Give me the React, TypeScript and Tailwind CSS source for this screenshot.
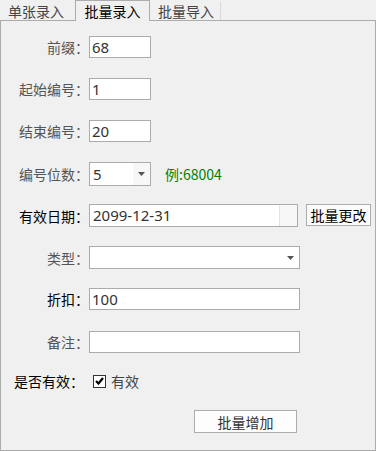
const cjk = "font-['Noto_Sans_CJK_SC',sans-serif]"
const num = "font-['Noto_Sans','Noto_Sans_CJK_SC',sans-serif]"

function Label({ text, dark = false }: { text: string; dark?: boolean }) {
  return (
    <div
      className={`w-[88px] shrink-0 text-right text-[14px] leading-none ${cjk} ${
        dark ? "text-black" : "text-[#555]"
      }`}
    >
      {text}：
    </div>
  )
}

function TextBox({ value = "", width }: { value?: string; width: string }) {
  return (
    <div
      className={`${width} h-full border border-[#ababab] bg-white pl-[2px] flex items-center text-[15px] text-[#333] ${num}`}
    >
      {value}
    </div>
  )
}

function Caret() {
  return (
    <svg width="7" height="4" viewBox="0 0 7 4">
      <path d="M0 0h7L3.5 4z" fill="#555" />
    </svg>
  )
}

export default function App() {
  const tabs = ["单张录入", "批量录入", "批量导入"]

  return (
    <div className="w-[376px] h-[451px] bg-[#f0f0f0] flex flex-col">
      <div className={`flex items-end h-[20px] text-[14px] leading-none ${cjk}`}>
        {tabs.map((t, i) =>
          i === 1 ? (
            <div
              key={t}
              className="relative z-10 -mb-px h-[21px] w-[75px] bg-[#f0f0f0] border border-b-0 border-[#acacac] flex items-center justify-center text-black"
            >
              {t}
            </div>
          ) : (
            <div
              key={t}
              className={`h-[18px] flex items-center text-[#444] ${
                i === 0 ? "w-[75px] pl-[8px]" : "w-[71px] pl-[8px] border-r border-[#d9d9d9]"
              }`}
            >
              {t}
            </div>
          )
        )}
      </div>

      <div className="flex-1 border border-[#acacac] flex flex-col pt-[15px]">
        <div className="flex items-center h-[22px]">
          <Label text="前缀" />
          <TextBox value="68" width="w-[62px]" />
        </div>

        <div className="flex items-center h-[22px] mt-[20px]">
          <Label text="起始编号" />
          <TextBox value="1" width="w-[62px]" />
        </div>

        <div className="flex items-center h-[22px] mt-[20px]">
          <Label text="结束编号" />
          <TextBox value="20" width="w-[62px]" />
        </div>

        <div className="flex items-center h-[24px] mt-[20px]">
          <Label text="编号位数" />
          <div className={`w-[62px] h-full border border-[#ababab] bg-white flex text-[15px] text-[#333] ${num}`}>
            <div className="flex-1 flex items-center pl-[3px]">5</div>
            <div className="w-[17px] bg-[#f7f7f7] flex items-center justify-center">
              <Caret />
            </div>
          </div>
          <div className={`ml-[14px] text-[14px] text-[#008000] ${cjk}`}>例:68004</div>
        </div>

        <div className="flex items-center h-[23px] mt-[18px]">
          <Label text="有效日期" dark />
          <div className={`w-[209px] h-full border border-[#ababab] bg-white flex text-[15px] text-[#333] ${num}`}>
            <div className="flex-1 flex items-center pl-[3px]">2099-12-31</div>
            <div className="w-[18px] bg-[#f7f7f7] border-l border-[#e3e3e3]" />
          </div>
          <button
            className={`ml-[8px] self-start w-[65px] h-[22px] border border-[#adadad] bg-[#fbfbfb] text-[14px] leading-none text-black ${cjk}`}
          >
            批量更改
          </button>
        </div>

        <div className="flex items-center h-[23px] mt-[19px]">
          <Label text="类型" />
          <div className="w-[211px] h-full border border-[#ababab] bg-white flex items-center justify-end pr-[5px]">
            <Caret />
          </div>
        </div>

        <div className="flex items-center h-[22px] mt-[19px]">
          <Label text="折扣" dark />
          <TextBox value="100" width="w-[211px]" />
        </div>

        <div className="flex items-center h-[22px] mt-[21px]">
          <Label text="备注" />
          <TextBox width="w-[211px]" />
        </div>

        <div className={`flex items-center h-[20px] mt-[18px] text-[14px] leading-none ${cjk}`}>
          <div className="pl-[13px] w-[92px] text-black">是否有效：</div>
          <div className="w-[13px] h-[13px] border border-[#333] bg-white flex items-center justify-center">
            <svg width="9" height="8" viewBox="0 0 9 8">
              <path d="M1 4l2.5 2.5L8 1" stroke="#000" strokeWidth="2.2" fill="none" />
            </svg>
          </div>
          <div className="ml-[5px] text-[#444]">有效</div>
        </div>

        <div className="flex mt-[19px] pl-[193px]">
          <button
            className={`w-[103px] h-[23px] border border-[#adadad] bg-[#fdfdfd] text-[14px] leading-none text-[#333] ${cjk}`}
          >
            批量增加
          </button>
        </div>
      </div>
    </div>
  )
}
